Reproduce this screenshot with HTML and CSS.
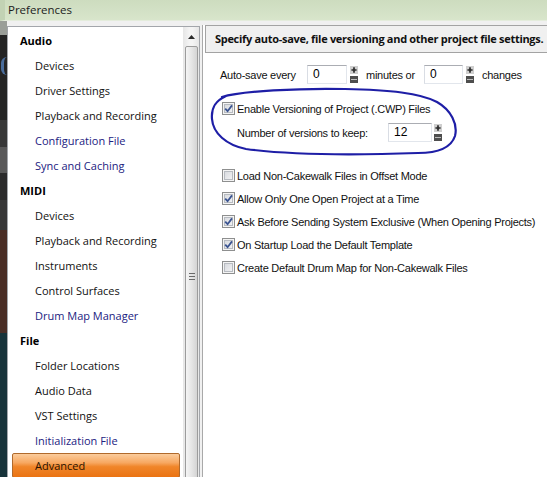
FILE: index.html
```html
<!DOCTYPE html>
<html>
<head>
<meta charset="utf-8">
<title>Preferences</title>
<link rel="stylesheet" href="styles.css">
</head>
<body>
<div class="titlebar">Preferences</div>
<div class="frame">
  <div class="backdrop">
    <i class="seg s1"></i>
    <i class="seg s2"><b class="glyph"></b></i>
    <i class="seg s3"></i>
    <i class="seg s4"></i>
    <i class="seg s5"></i>
    <i class="seg s6"></i>
    <i class="seg s7"></i>
    <i class="seg s8"></i>
  </div>
  <div class="dialog">
    <div class="nav">
      <ul class="tree">
        <li class="group">Audio</li>
        <li>Devices</li>
        <li>Driver Settings</li>
        <li>Playback and Recording</li>
        <li class="link">Configuration File</li>
        <li class="link">Sync and Caching</li>
        <li class="group">MIDI</li>
        <li>Devices</li>
        <li>Playback and Recording</li>
        <li>Instruments</li>
        <li>Control Surfaces</li>
        <li class="link">Drum Map Manager</li>
        <li class="group">File</li>
        <li>Folder Locations</li>
        <li>Audio Data</li>
        <li>VST Settings</li>
        <li class="link">Initialization File</li>
        <li class="sel">Advanced</li>
      </ul>
      <div class="vscroll">
        <div class="vs-up"><svg width="7" height="4" viewBox="0 0 7 4"><path d="M0 4 L3.5 0 L7 4 Z" fill="#2b2b2b"/></svg></div>
        <div class="vs-thumb"><span class="grip"></span></div>
      </div>
    </div>
    <div class="page">
      <div class="page-head">Specify auto-save, file versioning and other project file settings.</div>
      <div class="page-body">
        <div class="row autosave">
          <span class="lbl w-every">Auto-save every</span>
          <span class="field w-min">0</span>
          <svg class="spin" width="8" height="19" viewBox="0 0 8 19"><rect x="0" y="1" width="8" height="8" fill="#cfcfcf"/><path d="M4 2.2v5.6M1.4 5h5.2" stroke="#2a2a2a" stroke-width="1.7"/><rect x="0" y="11" width="8" height="7" fill="#4e4e4e"/><path d="M1 14.5h6" stroke="#bdbdbd" stroke-width="1"/></svg>
          <span class="lbl w-or">minutes or</span>
          <span class="field w-chg">0</span>
          <svg class="spin" width="8" height="19" viewBox="0 0 8 19"><rect x="0" y="1" width="8" height="8" fill="#cfcfcf"/><path d="M4 2.2v5.6M1.4 5h5.2" stroke="#2a2a2a" stroke-width="1.7"/><rect x="0" y="11" width="8" height="7" fill="#4e4e4e"/><path d="M1 14.5h6" stroke="#bdbdbd" stroke-width="1"/></svg>
          <span class="lbl after">changes</span>
        </div>
        <label class="check enable"><span class="cb"><svg width="9" height="9" viewBox="0 0 9 9"><path d="M1.2 4.6 L3.6 7.2 L8 1.4" fill="none" stroke="#3b5491" stroke-width="1.8"/></svg></span>Enable Versioning of Project (.CWP) Files</label>
        <div class="row keep">
          <span class="lbl w-keep">Number of versions to keep:</span>
          <span class="field w-ver">12</span>
          <svg class="spin" width="8" height="19" viewBox="0 0 8 19"><rect x="0" y="1" width="8" height="8" fill="#cfcfcf"/><path d="M4 2.2v5.6M1.4 5h5.2" stroke="#2a2a2a" stroke-width="1.7"/><rect x="0" y="11" width="8" height="7" fill="#4e4e4e"/><path d="M1 14.5h6" stroke="#bdbdbd" stroke-width="1"/></svg>
        </div>
        <div class="checks">
          <label class="check"><span class="cb"></span>Load Non-Cakewalk Files in Offset Mode</label>
          <label class="check"><span class="cb"><svg width="9" height="9" viewBox="0 0 9 9"><path d="M1.2 4.6 L3.6 7.2 L8 1.4" fill="none" stroke="#3b5491" stroke-width="1.8"/></svg></span>Allow Only One Open Project at a Time</label>
          <label class="check"><span class="cb"><svg width="9" height="9" viewBox="0 0 9 9"><path d="M1.2 4.6 L3.6 7.2 L8 1.4" fill="none" stroke="#3b5491" stroke-width="1.8"/></svg></span>Ask Before Sending System Exclusive (When Opening Projects)</label>
          <label class="check"><span class="cb"><svg width="9" height="9" viewBox="0 0 9 9"><path d="M1.2 4.6 L3.6 7.2 L8 1.4" fill="none" stroke="#3b5491" stroke-width="1.8"/></svg></span>On Startup Load the Default Template</label>
          <label class="check"><span class="cb"></span>Create Default Drum Map for Non-Cakewalk Files</label>
        </div>
      </div>
    </div>
  </div>
</div>
<!-- hand-drawn pen loop around the versioning options -->
<svg class="ink" width="547" height="477" viewBox="0 0 547 477">
  <path d="M222 97 C 240 91, 300 88, 345 89 C 390 90, 420 93, 437 102 C 451 110, 458 124, 455 136 C 451 148, 438 153, 418 153 C 360 155, 290 155, 246 149 C 226 145, 213 133, 212 119 C 211 108, 215 101, 226 96" fill="none" stroke="#1e1ea6" stroke-width="2.2" stroke-linecap="round"/>
</svg>
</body>
</html>
```

FILE: styles.css
```css
* {
  box-sizing: border-box;
}

html,
body {
  margin: 0;
  padding: 0;
}

body {
  position: relative;
  width: 547px;
  height: 477px;
  overflow: hidden;
  background: #262626;
  font-family: "Liberation Sans", Arial, sans-serif;
}

/* window caption */
.titlebar {
  height: 21px;
  padding-left: 3px;
  border-left: 5px solid #c2d2b4;
  border-bottom: 1px solid #e4ecdc;
  background: linear-gradient(#cddcbf, #d8e5cb);
  font: 11.5px/20px "Open Sans", sans-serif;
  color: #1c1c1c;
}

.frame {
  display: flex;
  height: 456px;
}

/* application visible behind the dialog */
.backdrop {
  display: flex;
  flex-direction: column;
  width: 7px;
  flex-shrink: 0;
}

.seg {
  display: block;
  position: relative;
}

.s1 { height: 14px; background: #9a9e98; }
.s2 { height: 85px; background: #242424; }
.s3 { height: 27px; background: #383838; }
.s4 { height: 26px; background: #595959; }
.s5 { height: 27px; background: #2b2b2b; }
.s6 { height: 30px; background: #373737; }
.s7 { height: 103px; background: #4a2d25; }
.s8 { flex: 1; background: #17333a; }

.glyph {
  position: absolute;
  left: 1px;
  top: 22px;
  width: 6px;
  height: 18px;
  border-left: 3px solid #4a6d9c;
  border-radius: 6px 0 0 6px;
}

.dialog {
  flex: 1;
  display: flex;
  background: #f0f0f0;
  overflow: hidden;
}

/* category tree */
.nav {
  display: flex;
  width: 193px;
  flex-shrink: 0;
  height: 470px;
  margin-top: 5px;
  border: 1px solid #a3a6ab;
  background: #fff;
}

.tree {
  list-style: none;
  margin: 0;
  padding: 1px 0 0;
  width: 175px;
  font: 11px/25px "Open Sans", sans-serif;
  color: #111;
}

.tree li {
  height: 25px;
  padding-left: 27px;
  white-space: nowrap;
}

.tree .group {
  padding-left: 12px;
  font-weight: 700;
  color: #000;
}

.tree .link {
  color: #22227f;
}

.tree .sel {
  margin: 0 3px 0 4px;
  padding-left: 22px;
  line-height: 23px;
  border: 1px solid #b06a2c;
  border-radius: 2px;
  background: linear-gradient(#fbcc9c 0%, #f7a861 38%, #f0862a 55%, #ea7313 100%);
  color: #2a1200;
}

.vscroll {
  width: 16px;
  flex-shrink: 0;
  background: linear-gradient(to right, #e6e6e6, #f4f4f4 40%, #f4f4f4 60%, #e6e6e6);
}

.vs-up {
  height: 18px;
  display: flex;
  align-items: center;
  justify-content: center;
  padding-top: 2px;
}

.vs-thumb {
  position: relative;
  height: 440px;
  margin: 1px 1px 0 2px;
  border: 1px solid #9c9c9c;
  border-radius: 2px;
  background: linear-gradient(to right, #f5f5f5, #e6e6e6 50%, #d4d4d4);
}

.grip {
  position: absolute;
  left: 3px;
  top: 226px;
  width: 6px;
  height: 7px;
  border-top: 1px solid #6a6a6a;
  border-bottom: 1px solid #6a6a6a;
}

.grip::after {
  content: "";
  position: absolute;
  left: 0;
  right: 0;
  top: 2px;
  border-top: 1px solid #6a6a6a;
}

/* settings page */
.page {
  flex: 1;
  margin: 4px 0 0 2px;
  border-left: 1px solid #a9a9a9;
  background: #fff;
  overflow: hidden;
}

.page-head {
  height: 28px;
  margin: 0 -12px 0 2px;
  padding-left: 9px;
  border: 1px solid #a3a3a3;
  background: #f0f0f0;
  font: 700 11px/26px "Open Sans", sans-serif;
  letter-spacing: -0.3px;
  color: #111;
  white-space: nowrap;
}

.page-body {
  padding-left: 17px;
  font-size: 11px;
  letter-spacing: -0.25px;
  color: #111;
}

.row {
  display: flex;
  align-items: center;
  height: 19px;
  white-space: nowrap;
}

.autosave {
  margin-top: 12px;
}

.keep {
  margin-top: 6px;
  padding-left: 17px;
}

.lbl {
  flex-shrink: 0;
}

.w-every { width: 87px; }
.w-or { width: 58px; margin-left: 8px; }
.w-keep { width: 151px; }
.after { margin-left: 8px; }

.field {
  height: 19px;
  padding-left: 5px;
  border: 1px solid #e2e6ec;
  border-top-color: #abadb3;
  border-left-color: #d9dde4;
  background: #fff;
  font-size: 12px;
  line-height: 17px;
  letter-spacing: 0;
  color: #000;
}

.w-min { width: 40px; }
.w-chg { width: 39px; }
.w-ver { width: 44px; }

.spin {
  display: block;
  margin-left: 3px;
  flex-shrink: 0;
}

.keep .spin {
  margin-left: 2px;
}

.check {
  display: flex;
  align-items: center;
  height: 17px;
  padding-left: 2px;
  white-space: nowrap;
}

.enable {
  margin-top: 16px;
}

.checks {
  margin-top: 22px;
}

.checks .check {
  height: 23px;
}

.cb {
  display: flex;
  align-items: center;
  justify-content: center;
  width: 13px;
  height: 13px;
  margin-right: 2px;
  flex-shrink: 0;
  border: 1px solid #8e8f8f;
  background: #f4f4f4;
  box-shadow: inset 0 0 0 1px #f4f4f4, inset 0 0 0 2px #b7bbc1;
  background-image: linear-gradient(135deg, #d2d5da, #f7f7f8);
}

/* pen annotation layered over the page */
.ink {
  position: absolute;
  left: 0;
  top: 0;
  pointer-events: none;
}
```
